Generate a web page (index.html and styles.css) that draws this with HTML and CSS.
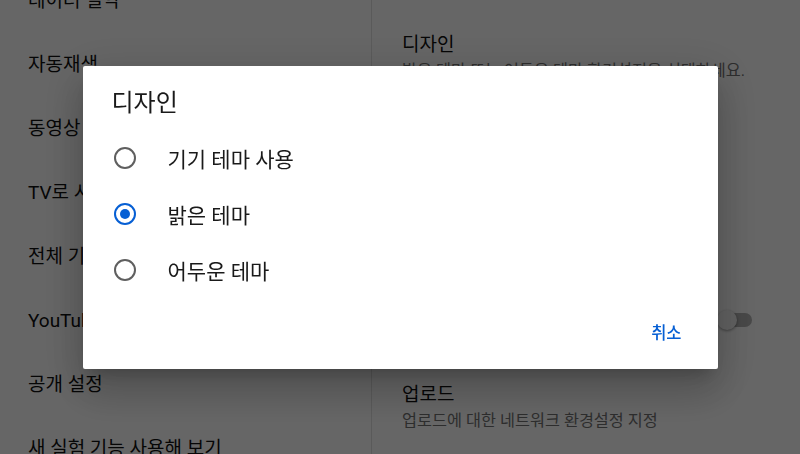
FILE: index.html
```html
<!DOCTYPE html>
<html lang="ko">
<head>
<meta charset="utf-8">
<title>설정 - 디자인</title>
<link rel="stylesheet" href="styles.css">
</head>
<body>
<div class="page">
  <nav class="nav">
    <ul class="nav-list">
      <li class="nav-item">데이터 절약</li>
      <li class="nav-item">자동재생</li>
      <li class="nav-item">동영상 화질 환경설정</li>
      <li class="nav-item">TV로 시청</li>
      <li class="nav-item">전체 기록 관리</li>
      <li class="nav-item">YouTube의 내 데이터</li>
      <li class="nav-item">공개 설정</li>
      <li class="nav-item">새 실험 기능 사용해 보기</li>
    </ul>
  </nav>
  <main class="content">
    <div class="pref">
      <div class="pref-text">
        <div class="pref-title">디자인</div>
        <div class="pref-sub">밝은 테마 또는 어두운 테마 환경설정을 선택하세요.</div>
      </div>
    </div>
    <div class="pref">
      <div class="pref-text">
        <div class="pref-title">앱 언어</div>
        <div class="pref-sub">기기 언어</div>
      </div>
    </div>
    <div class="pref pref-tall">
      <div class="pref-text">
        <div class="pref-title">위치</div>
        <div class="pref-sub">대한민국</div>
      </div>
    </div>
    <div class="pref pref-tall">
      <div class="pref-text">
        <div class="pref-title">제한 모드</div>
        <div class="pref-sub">성인용 동영상을 숨깁니다.</div>
      </div>
      <div class="switch"><span class="switch-track"></span><span class="switch-thumb"></span></div>
    </div>
    <div class="pref">
      <div class="pref-text">
        <div class="pref-title">업로드</div>
        <div class="pref-sub">업로드에 대한 네트워크 환경설정 지정</div>
      </div>
    </div>
  </main>
</div>

<div class="scrim">
  <div class="dialog" role="dialog">
    <h2 class="dialog-title">디자인</h2>
    <ul class="options">
      <li class="option"><span class="radio"></span><span class="option-label">기기 테마 사용</span></li>
      <li class="option"><span class="radio radio-on"></span><span class="option-label">밝은 테마</span></li>
      <li class="option"><span class="radio"></span><span class="option-label">어두운 테마</span></li>
    </ul>
    <div class="actions">
      <button class="btn-text">취소</button>
    </div>
  </div>
</div>
</body>
</html>
```
FILE: styles.css
```css
html, body {
  margin: 0;
  padding: 0;
  height: 100%;
  overflow: hidden;
  background: #ffffff;
  font-family: Roboto, "Noto Sans CJK KR", sans-serif;
  color: #0f0f0f;
}

.page {
  display: flex;
  height: 454px;
  overflow: hidden;
}

.nav {
  width: 371px;
  flex: none;
  border-right: 1px solid #e2e2e2;
}

.nav-list {
  list-style: none;
  margin: -34px 0 0 0;
  padding: 0;
}

.nav-item {
  height: 64px;
  display: flex;
  align-items: center;
  padding-left: 28px;
  font-size: 19px;
  color: #0f0f0f;
  white-space: nowrap;
}

.content {
  flex: 1;
  padding-top: 15px;
  display: flex;
  flex-direction: column;
}

.pref {
  display: flex;
  align-items: center;
  padding: 18px 47px 18px 30px;
  box-sizing: border-box;
  min-height: 84px;
}

.pref-tall {
  min-height: 91px;
}

.pref-text {
  flex: 1;
  min-width: 0;
}

.pref-title {
  font-size: 19px;
  line-height: 24px;
  color: #0f0f0f;
  white-space: nowrap;
}

.pref-sub {
  font-size: 16.3px;
  line-height: 20px;
  margin-top: 4px;
  color: #727272;
  white-space: nowrap;
}

.switch {
  position: relative;
  width: 36px;
  height: 20px;
  flex: none;
}

.switch-track {
  position: absolute;
  left: 1px;
  top: 3px;
  width: 34px;
  height: 14px;
  border-radius: 7px;
  background: #b5b5b5;
}

.switch-thumb {
  position: absolute;
  left: 0;
  top: 0;
  width: 20px;
  height: 20px;
  border-radius: 50%;
  background: #f5f5f5;
  box-shadow: 0 1px 3px rgba(0, 0, 0, 0.4);
}

.scrim {
  position: fixed;
  inset: 0;
  background: rgba(0, 0, 0, 0.6);
  display: flex;
  justify-content: center;
  align-items: flex-start;
  padding-top: 66px;
  box-sizing: border-box;
}

.dialog {
  width: 635px;
  background: #ffffff;
  border-radius: 2px;
  padding: 23px 0 19px 0;
  box-sizing: border-box;
  box-shadow: 0 11px 15px -7px rgba(0, 0, 0, 0.2),
              0 24px 38px 3px rgba(0, 0, 0, 0.14),
              0 9px 46px 8px rgba(0, 0, 0, 0.12);
}

.dialog-title {
  margin: 0;
  padding-left: 29px;
  font-size: 24px;
  line-height: 28px;
  font-weight: 400;
  color: #1a1a1a;
}

.options {
  list-style: none;
  margin: 13px 0 0 0;
  padding: 0;
}

.option {
  height: 56px;
  display: flex;
  align-items: center;
  padding-left: 31px;
}

.radio {
  width: 22px;
  height: 22px;
  box-sizing: border-box;
  border: 2px solid #5f5f5f;
  border-radius: 50%;
  display: flex;
  align-items: center;
  justify-content: center;
  flex: none;
}

.radio-on {
  border-color: #065fd4;
}

.radio-on::after {
  content: "";
  width: 10px;
  height: 10px;
  border-radius: 50%;
  background: #065fd4;
}

.option-label {
  margin-left: 32px;
  font-size: 21px;
  color: #1a1a1a;
}

.actions {
  display: flex;
  justify-content: flex-end;
  margin-top: 16px;
  padding-right: 28px;
}

.btn-text {
  height: 36px;
  padding: 0 8px;
  border: none;
  background: none;
  font-family: Roboto, "Noto Sans CJK KR", sans-serif;
  font-size: 16.5px;
  font-weight: 500;
  color: #065fd4;
}
```
